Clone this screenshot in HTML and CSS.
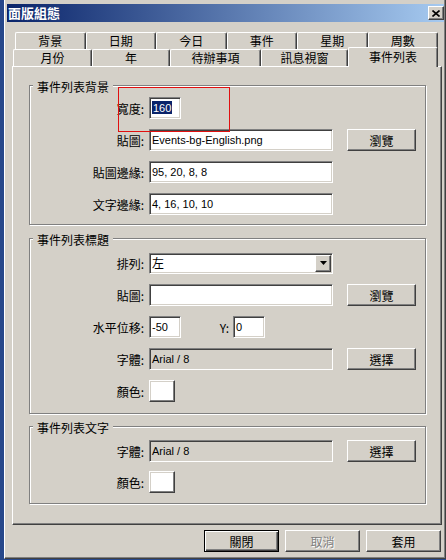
FILE: index.html
```html
<!DOCTYPE html>
<html lang="zh-Hant">
<head>
  <meta charset="UTF-8">
  <title>面版組態</title>
  <link rel="stylesheet" href="styles.css">
</head>
<body>
  <div class="window">
    <div class="titlebar">
      <span class="title">面版組態</span>
      <span class="close">
        <svg width="8" height="7" viewBox="0 0 8 7"><path d="M0.5 0.5 L7.5 6.5 M7.5 0.5 L0.5 6.5" stroke="#000" stroke-width="1.6" fill="none"/></svg>
      </span>
    </div>

    <div class="tabs">
      <div class="tab-row back">
        <div class="tab">背景</div>
        <div class="tab">日期</div>
        <div class="tab">今日</div>
        <div class="tab">事件</div>
        <div class="tab">星期</div>
        <div class="tab">周數</div>
      </div>
      <div class="tab-row front">
        <div class="tab w79">月份</div>
        <div class="tab w78">年</div>
        <div class="tab w91">待辦事項</div>
        <div class="tab w87">訊息視窗</div>
        <div class="tab w90 active">事件列表</div>
      </div>
    </div>

    <div class="panel">
      <div class="group first">
        <div class="group-title">事件列表背景</div>
        <div class="rows">
          <div class="row">
            <span class="lbl">寬度:</span>
            <div class="field short"><span class="sel">160</span></div>
          </div>
          <div class="row">
            <span class="lbl">貼圖:</span>
            <div class="field">Events-bg-English.png</div>
            <button class="btn">瀏覽</button>
          </div>
          <div class="row">
            <span class="lbl">貼圖邊緣:</span>
            <div class="field">95, 20, 8, 8</div>
          </div>
          <div class="row">
            <span class="lbl">文字邊緣:</span>
            <div class="field">4, 16, 10, 10</div>
          </div>
        </div>
        <div class="mark"></div>
      </div>

      <div class="group second">
        <div class="group-title">事件列表標題</div>
        <div class="rows">
          <div class="row">
            <span class="lbl">排列:</span>
            <div class="field select">
              <span class="cjk">左</span>
              <span class="arrow">
                <svg width="7" height="4" viewBox="0 0 7 4"><polygon points="0,0 7,0 3.5,4" fill="#000"/></svg>
              </span>
            </div>
          </div>
          <div class="row">
            <span class="lbl">貼圖:</span>
            <div class="field"></div>
            <button class="btn">瀏覽</button>
          </div>
          <div class="row">
            <span class="lbl">水平位移:</span>
            <div class="field short">-50</div>
            <span class="ylbl">Y:</span>
            <div class="field short">0</div>
          </div>
          <div class="row">
            <span class="lbl">字體:</span>
            <div class="field disabled">Arial / 8</div>
            <button class="btn">選擇</button>
          </div>
          <div class="row">
            <span class="lbl">顏色:</span>
            <div class="swatch"></div>
          </div>
        </div>
      </div>

      <div class="group third">
        <div class="group-title">事件列表文字</div>
        <div class="rows">
          <div class="row">
            <span class="lbl">字體:</span>
            <div class="field disabled">Arial / 8</div>
            <button class="btn">選擇</button>
          </div>
          <div class="row">
            <span class="lbl">顏色:</span>
            <div class="swatch"></div>
          </div>
        </div>
      </div>
    </div>

    <div class="actions">
      <button class="btn wide default">關閉</button>
      <button class="btn wide disabled-btn">取消</button>
      <button class="btn wide">套用</button>
    </div>
  </div>
</body>
</html>
```

FILE: styles.css
```css
body {
  margin: 0;
  width: 446px;
  height: 560px;
  overflow: hidden;
  background: #26478a;
  font-family: "Noto Sans CJK TC", sans-serif;
  font-size: 12px;
  color: #000;
}

.window {
  margin-left: 4px;
  width: 442px;
  height: 559px;
  box-sizing: border-box;
  padding: 4px 1px 0 2px;
  background: #d4d0c8;
  border-left: 1px solid #fff;
  border-right: 1px solid #404040;
  border-bottom: 1px solid #404040;
  box-shadow: inset -1px -1px #808080;
}

/* title bar */
.titlebar {
  height: 18px;
  display: flex;
  align-items: center;
  justify-content: space-between;
  padding-left: 1px;
  background: linear-gradient(to right, #0a246a, #a6caf0);
}
.title { color: #fff; font-weight: bold; font-size: 13px; line-height: 18px; }
.close {
  width: 16px; height: 14px; box-sizing: border-box;
  display: flex; align-items: center; justify-content: center;
  background: #d4d0c8;
  border-top: 1px solid #fff; border-left: 1px solid #fff;
  border-right: 1px solid #404040; border-bottom: 1px solid #404040;
  box-shadow: inset -1px -1px #808080;
}

/* tabs */
.tabs { margin: 10px 0 0 5px; width: 430px; }
.tab-row { display: flex; height: 17px; }
.tab-row.back { padding: 0 4px 0 3px; }
.tab-row.back .tab { flex: 1; }
.tab-row.front { padding-left: 1px; }
.tab {
  box-sizing: border-box;
  height: 17px;
  line-height: 16px;
  text-align: center;
  background: #d4d0c8;
  border-top: 1px solid #fff;
  border-left: 1px solid #fff;
  border-right: 1px solid #404040;
  border-radius: 2px 2px 0 0;
  box-shadow: inset -1px 0 #808080;
  white-space: nowrap;
}
.w78 { width: 78px; }
.w79 { width: 79px; }
.w87 { width: 87px; }
.w90 { width: 90px; }
.w91 { width: 91px; }
.tab.active {
  position: relative;
  z-index: 1;
  height: 20px;
  margin-top: -2px;
  line-height: 18px;
}

/* panel */
.panel {
  width: 430px;
  height: 459px;
  margin-left: 5px;
  box-sizing: border-box;
  padding: 18px 15px 0 16px;
  border-top: 1px solid #fff;
  border-left: 1px solid #fff;
  border-right: 1px solid #404040;
  border-bottom: 1px solid #404040;
  box-shadow: inset -1px -1px #808080;
}

.group {
  position: relative;
  border: 1px solid #808080;
  box-shadow: inset 1px 1px #fff, 1px 1px #fff;
}
.group.second { margin-top: 13px; }
.group.third { margin-top: 12px; }
.group-title {
  width: fit-content;
  height: 14px;
  line-height: 14px;
  margin: -6px 0 0 3px;
  padding: 0 4px;
  background: #d4d0c8;
}

.rows { display: flex; flex-direction: column; gap: 10px; padding: 5px 0 11px; }
.first .rows { padding: 3px 0 9px; }
.third .rows { gap: 9px; padding-bottom: 10px; }

.row { display: flex; align-items: center; height: 22px; }
.lbl {
  width: 114px;
  margin-right: 5px;
  text-align: right;
  white-space: nowrap;
}
.ylbl { width: 48px; padding-right: 4px; text-align: right; }

.field {
  width: 184px;
  height: 22px;
  box-sizing: border-box;
  padding: 0 2px;
  background: #fff;
  border-top: 1px solid #808080;
  border-left: 1px solid #808080;
  border-right: 1px solid #fff;
  border-bottom: 1px solid #fff;
  box-shadow: inset 1px 1px #404040, inset -1px -1px #d4d0c8;
  font-family: "Liberation Sans", Arial, sans-serif;
  font-size: 11px;
  line-height: 20px;
  white-space: nowrap;
  overflow: hidden;
}
.field.short { width: 32px; }
.field.disabled { background: #d4d0c8; }
.sel { background: #0a246a; color: #fff; padding: 1px 1px 0; }

.field.select {
  height: 21px;
  display: flex;
  align-items: center;
  justify-content: space-between;
  padding: 0 1px 0 2px;
}
.cjk { font-family: "Noto Sans CJK TC", sans-serif; font-size: 12px; }
.arrow {
  width: 16px; height: 17px; box-sizing: border-box;
  display: flex; align-items: center; justify-content: center;
  background: #d4d0c8;
  border-top: 1px solid #fff; border-left: 1px solid #fff;
  border-right: 1px solid #404040; border-bottom: 1px solid #404040;
  box-shadow: inset -1px -1px #808080;
}

.swatch {
  width: 26px;
  height: 22px;
  box-sizing: border-box;
  background: #fff;
  border-top: 1px solid #fff;
  border-left: 1px solid #fff;
  border-right: 1px solid #404040;
  border-bottom: 1px solid #404040;
  box-shadow: inset -1px -1px #808080, inset 1px 1px #d4d0c8;
}

.btn {
  width: 69px;
  height: 22px;
  margin-left: 14px;
  padding: 0;
  box-sizing: border-box;
  background: #d4d0c8;
  border-top: 1px solid #fff;
  border-left: 1px solid #fff;
  border-right: 1px solid #404040;
  border-bottom: 1px solid #404040;
  box-shadow: inset -1px -1px #808080;
  font-family: "Noto Sans CJK TC", sans-serif;
  font-size: 12px;
  color: #000;
}
.btn.wide { width: 75px; margin-left: 0; }
.btn.default {
  border: 1px solid #000;
  box-shadow: inset 1px 1px #fff, inset -1px -1px #404040, inset -2px -2px #808080;
}
.btn.disabled-btn { color: #808080; text-shadow: 1px 1px #fff; }

.actions {
  display: flex;
  justify-content: flex-end;
  gap: 6px;
  width: 429px;
  margin: 5px 0 0 5px;
}

.mark {
  position: absolute;
  left: 88px;
  top: 1px;
  width: 110px;
  height: 43px;
  border: 1px solid #e01010;
}
```
